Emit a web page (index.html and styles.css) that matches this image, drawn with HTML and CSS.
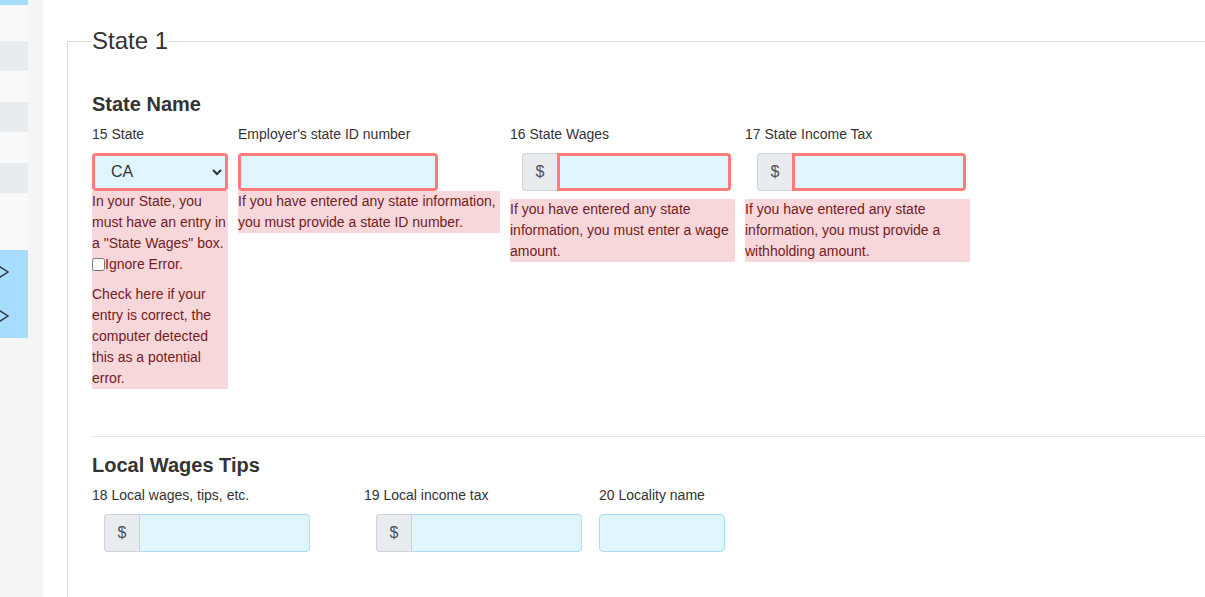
FILE: index.html
```html
<!DOCTYPE html>
<html lang="en">
<head>
  <meta charset="UTF-8">
  <title>W-2 State and Local</title>
  <link rel="stylesheet" href="styles.css">
</head>
<body>

  <div class="layout">
    <aside class="sidebar">
      <ul class="steps">
        <li class="step step-done step-thin"></li>
        <li class="step step-light step-tall"></li>
        <li class="step step-grey"></li>
        <li class="step step-light"></li>
        <li class="step step-grey"></li>
        <li class="step step-light"></li>
        <li class="step step-grey"></li>
        <li class="step step-light step-wide"></li>
        <li class="step step-done step-link">
          <svg width="28" height="44" viewBox="0 0 28 44"><polyline points="-3,15 8,22 -3,29" fill="none" stroke="#333" stroke-width="1.4"/></svg>
        </li>
        <li class="step step-done step-link">
          <svg width="28" height="44" viewBox="0 0 28 44"><polyline points="-3,15 8,22 -3,29" fill="none" stroke="#333" stroke-width="1.4"/></svg>
        </li>
      </ul>
    </aside>

    <main class="content">
      <fieldset class="state-box">
        <legend>State 1</legend>

        <h5 class="section-title first">State Name</h5>
        <div class="field-row">
          <div class="field col-state">
            <label class="field-label">15 State</label>
            <select class="form-control is-invalid state-select">
              <option>CA</option>
            </select>
            <div class="invalid-note">
              In your State, you must have an entry in a "State Wages" box.
              <label class="ignore"><input type="checkbox">Ignore Error.</label>
              <p class="ignore-help">Check here if your entry is correct, the computer detected this as a potential error.</p>
            </div>
          </div>

          <div class="field col-wide">
            <label class="field-label">Employer's state ID number</label>
            <input type="text" class="form-control is-invalid id-input">
            <div class="invalid-note">If you have entered any state information, you must provide a state ID number.</div>
          </div>

          <div class="field col-mid">
            <label class="field-label">16 State Wages</label>
            <div class="input-group state-group">
              <span class="input-group-text">$</span>
              <input type="text" class="form-control is-invalid">
            </div>
            <div class="invalid-note">If you have entered any state information, you must enter a wage amount.</div>
          </div>

          <div class="field col-mid">
            <label class="field-label">17 State Income Tax</label>
            <div class="input-group state-group">
              <span class="input-group-text">$</span>
              <input type="text" class="form-control is-invalid">
            </div>
            <div class="invalid-note">If you have entered any state information, you must provide a withholding amount.</div>
          </div>
        </div>

        <hr class="divider">

        <h5 class="section-title">Local Wages Tips</h5>
        <div class="field-row">
          <div class="field col-wide">
            <label class="field-label">18 Local wages, tips, etc.</label>
            <div class="input-group local-group">
              <span class="input-group-text">$</span>
              <input type="text" class="form-control">
            </div>
          </div>

          <div class="field col-mid">
            <label class="field-label">19 Local income tax</label>
            <div class="input-group local-group">
              <span class="input-group-text">$</span>
              <input type="text" class="form-control">
            </div>
          </div>

          <div class="field col-small">
            <label class="field-label">20 Locality name</label>
            <input type="text" class="form-control">
          </div>
        </div>
      </fieldset>
    </main>
  </div>

</body>
</html>
```

FILE: styles.css
```css
* {
  box-sizing: border-box;
}

html,
body {
  margin: 0;
  padding: 0;
  overflow: hidden;
}

body {
  font-family: "Liberation Sans", Arial, sans-serif;
  font-size: 14px;
  line-height: 1.5;
  color: #333;
  background: #fff;
}

.layout {
  display: flex;
  height: 100vh;
}

/* left progress rail */
.sidebar {
  flex: 0 0 43px;
  background-color: #f5f5f5;
}

.steps {
  list-style: none;
  margin: 0;
  padding: 0;
  width: 28px;
  overflow: hidden;
}

.step {
  height: 30px;
}

.step-thin {
  height: 5px;
}

.step-light {
  height: 31px;
  background-color: #f8f9fa;
}

.step-grey {
  background-color: #e9ecef;
}

.step-tall {
  height: 36px;
}

.step-wide {
  height: 57px;
}

.step-done {
  background-color: #a6dcfd;
}

.step-link {
  height: 44px;
}

.step-link svg {
  display: block;
}

/* main form */
.content {
  flex: 1;
  min-width: 0;
  overflow: hidden;
  padding: 27px 0 0 24px;
}

.state-box {
  margin: 0 -50px 0 0;
  padding: 0 24px;
  min-height: 700px;
  border: 1px solid #ddd;
  border-bottom: none;
}

.state-box legend {
  padding: 0;
  font-size: 24px;
  line-height: 1.2;
  color: #333;
}

.section-title {
  margin: 0 0 8px;
  font-size: 20px;
  line-height: 1.2;
  font-weight: bold;
  color: #333;
}

.section-title.first {
  margin-top: 36px;
}

.field-row {
  display: flex;
  align-items: flex-start;
  gap: 10px;
}

.field-label {
  display: block;
  margin-bottom: 8px;
  color: #333;
}

.col-state {
  width: 136px;
}

.col-wide {
  width: 262px;
}

.col-mid {
  width: 225px;
}

.col-small {
  width: 126px;
}

.form-control {
  display: block;
  width: 100%;
  height: 38px;
  padding: 6px 12px;
  font-family: inherit;
  font-size: 16px;
  line-height: 1.5;
  color: #333;
  background-color: #e0f5fd;
  border: 1px solid #a9dcf6;
  border-radius: 4px;
}

.form-control.is-invalid {
  border: 3px solid #ff7b7b;
}

.id-input {
  width: 200px;
}

.input-group {
  display: flex;
  align-items: stretch;
}

.input-group-text {
  flex: 0 0 35px;
  display: flex;
  align-items: center;
  justify-content: center;
  height: 38px;
  font-size: 16px;
  color: #495057;
  background-color: #e9ecef;
  border: 1px solid #ced4da;
  border-right: none;
  border-radius: 4px 0 0 4px;
}

.input-group .form-control {
  flex: 1;
  width: auto;
  min-width: 0;
  border-radius: 0 4px 4px 0;
}

.state-group {
  width: 209px;
  margin: 0 0 8px 12px;
}

.local-group {
  width: 206px;
  margin-left: 12px;
}

.invalid-note {
  background-color: #f8d7da;
  color: #721c24;
}

.ignore {
  display: block;
}

.ignore input {
  width: 13px;
  height: 13px;
  margin: 0;
  vertical-align: -2px;
}

.ignore-help {
  margin: 9px 0 0;
}

.divider {
  margin: 47px 0 16px;
  border: 0;
  border-top: 1px solid #e6e6e6;
}
```
